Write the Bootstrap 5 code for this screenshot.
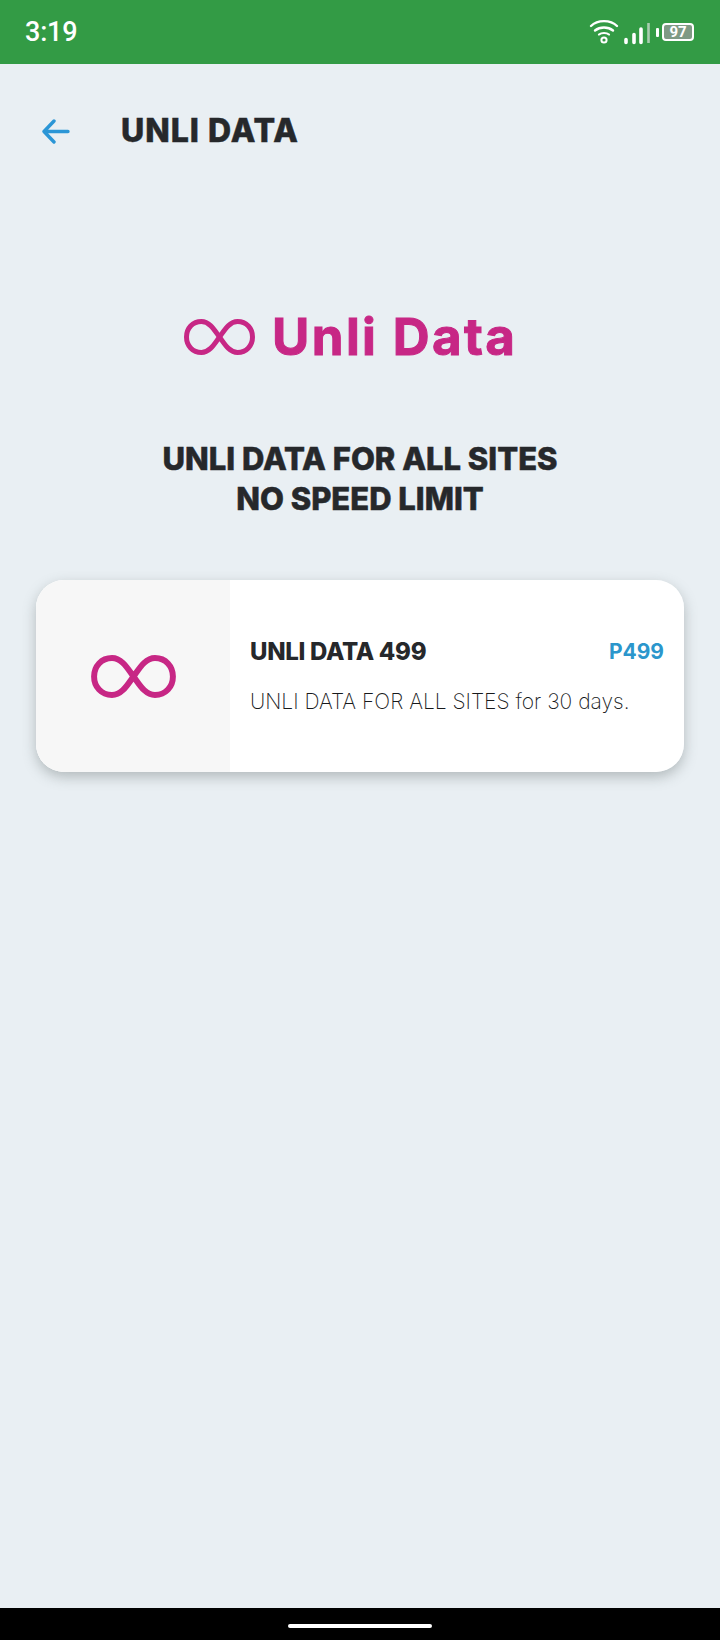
<!DOCTYPE html>
<html lang="en">
<head>
  <meta charset="UTF-8">
  <meta name="viewport" content="width=device-width, initial-scale=1.0">
  <title>Unli Data</title>
  <link href="https://cdn.jsdelivr.net/npm/bootstrap@5.3.0/dist/css/bootstrap.min.css" rel="stylesheet">
  <style>
    body {
      background: #e9eff3;
      font-family: Inter, "Liberation Sans", sans-serif;
      color: #26282b;
    }
    .app-screen { height: 1640px; width: 720px; overflow: hidden; }
    .status-strip { height: 64px; background: #339b45; color: #fff; padding: 0 26px 0 25px; }
    .status-time { font-family: Roboto, sans-serif; font-size: 27px; font-weight: 500; letter-spacing: -.2px; }
    .batt-nub { width: 3px; height: 9px; background: #fff; border-radius: 1px; margin: 0 3px 0 5px; }
    .batt-body { width: 32px; height: 18px; border: 2px solid #fff; border-radius: 4px; background: #7f9a85; font-family: Roboto, sans-serif; font-size: 15px; font-weight: 700; line-height: 14px; text-align: center; }
    .title-row { height: 132px; padding-left: 42px; padding-top: 2px; }
    .title-row svg { margin-right: 51px; }
    .title-text { font-size: 32px; font-weight: 800; letter-spacing: 1px; margin: 0; -webkit-text-stroke: .5px #26282b; }
    .promo-logo { margin-top: 121px; padding-left: 184px; height: 40px; }
    .logo-word { font-size: 51px; font-weight: 700; color: #c72785; letter-spacing: 2.4px; line-height: 40px; margin-left: 17px; -webkit-text-stroke: 1px #c72785; }
    .promo-head { margin: 82px 0 0; font-size: 31px; font-weight: 800; line-height: 40px; -webkit-text-stroke: .5px #26282b; }
    .offer-wrap { margin: 61px 36px 0; border-radius: 28px; box-shadow: 0 5px 13px rgba(90, 100, 100, .38); }
    .offer-card { height: 192px; border: 0; border-radius: 28px; overflow: hidden; background: #fff; }
    .offer-thumb { width: 194px; background: #f7f7f7; }
    .offer-body { padding: 58px 20px 0; }
    .offer-name { font-size: 24px; font-weight: 800; letter-spacing: -.3px; margin: 0; line-height: 28px; }
    .offer-price { font-size: 21px; font-weight: 700; color: #2b96cc; line-height: 28px; }
    .offer-desc { font-size: 21px; font-weight: 200; color: #17191b; margin: 22px 0 0; line-height: 28px; white-space: nowrap; }
    .nav-strip { position: fixed; left: 0; right: 0; top: 1608px; height: 32px; background: #000; }
    .home-pill { width: 144px; height: 4px; background: #fff; border-radius: 2px; margin-top: 16px; }
  </style>
</head>
<body>
  <div class="app-screen">
    <div class="status-strip d-flex align-items-center justify-content-between">
      <span class="status-time">3:19</span>
      <div class="d-flex align-items-center">
        <svg width="66" height="26" viewBox="0 0 66 26" fill="none" stroke="#fff" stroke-linecap="round">
          <path d="M6 7C12.500 .5 25.500 .5 32 7" stroke-width="2.400"/>
          <path d="M10 11.500C15 7.500 23 7.500 28 11.500" stroke-width="2.400"/>
          <path d="M14 15.500C16.500 13.500 21.500 13.500 24 15.500" stroke-width="2.200"/>
          <circle cx="19" cy="21" r="2.600" stroke-width="2"/>
          <path d="M41 20.500v3M49 15.500v8M56 10v13.500" stroke-width="3.600"/>
          <path d="M63.500 4v20" stroke="#a9cdb0" stroke-width="2.600" stroke-linecap="butt"/>
        </svg>
        <span class="batt-nub"></span>
        <div class="batt-body">97</div>
      </div>
    </div>

    <div class="title-row d-flex align-items-center">
      <svg width="28" height="25" viewBox="0 0 28 25" fill="none" stroke="#2b96d6" stroke-width="3.400" stroke-linecap="round" stroke-linejoin="round">
        <path d="M26 12.500H2M12 2 2 12.500 12 23"/>
      </svg>
      <h1 class="title-text">UNLI DATA</h1>
    </div>

    <div class="promo-logo d-flex align-items-center">
      <svg width="71" height="36" viewBox="0 0 71 36" fill="none" stroke="#c72785" stroke-width="5">
        <path d="M35.500 18C31 12 26 2.500 17.500 2.500C8.500 2.500 2.500 9.500 2.500 18C2.500 26.500 8.500 33.500 17.500 33.500C26 33.500 31 24 35.500 18C40 12 45 2.500 53.500 2.500C62.500 2.500 68.500 9.500 68.500 18C68.500 26.500 62.500 33.500 53.500 33.500C45 33.500 40 24 35.500 18Z"/>
      </svg>
      <span class="logo-word">Unli Data</span>
    </div>

    <h2 class="promo-head text-center">UNLI DATA FOR ALL SITES<br>NO SPEED LIMIT</h2>

    <div class="offer-wrap">
      <div class="offer-card card flex-row">
        <div class="offer-thumb d-flex align-items-center justify-content-center">
          <svg width="85" height="43" viewBox="0 0 71 36" fill="none" stroke="#c72785" stroke-width="5">
            <path d="M35.500 18C31 12 26 2.500 17.500 2.500C8.500 2.500 2.500 9.500 2.500 18C2.500 26.500 8.500 33.500 17.500 33.500C26 33.500 31 24 35.500 18C40 12 45 2.500 53.500 2.500C62.500 2.500 68.500 9.500 68.500 18C68.500 26.500 62.500 33.500 53.500 33.500C45 33.500 40 24 35.500 18Z"/>
          </svg>
        </div>
        <div class="offer-body flex-grow-1">
          <div class="d-flex justify-content-between">
            <h3 class="offer-name">UNLI DATA 499</h3>
            <span class="offer-price">P499</span>
          </div>
          <p class="offer-desc">UNLI DATA FOR ALL SITES for 30 days.</p>
        </div>
      </div>
    </div>

    <div class="nav-strip d-flex justify-content-center">
      <div class="home-pill"></div>
    </div>
  </div>
  <script src="https://cdn.jsdelivr.net/npm/bootstrap@5.3.0/dist/js/bootstrap.bundle.min.js"></script>
</body>
</html>
